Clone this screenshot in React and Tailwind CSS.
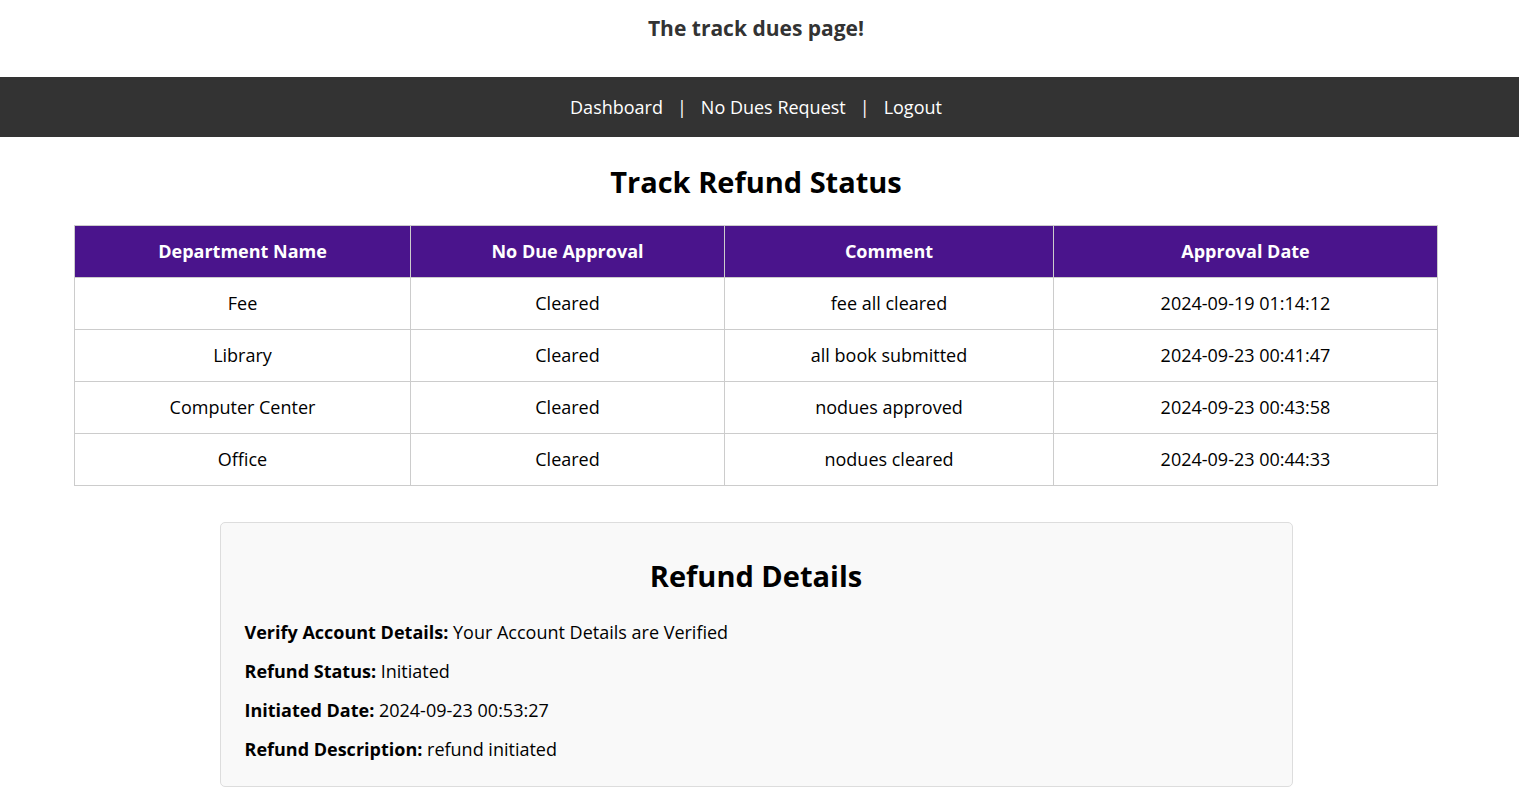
const ROWS = [
  { dept: 'Fee', status: 'Cleared', comment: 'fee all cleared', date: '2024-09-19 01:14:12' },
  { dept: 'Library', status: 'Cleared', comment: 'all book submitted', date: '2024-09-23 00:41:47' },
  { dept: 'Computer Center', status: 'Cleared', comment: 'nodues approved', date: '2024-09-23 00:43:58' },
  { dept: 'Office', status: 'Cleared', comment: 'nodues cleared', date: '2024-09-23 00:44:33' },
]

const DETAILS = [
  ['Verify Account Details', 'Your Account Details are Verified'],
  ['Refund Status', 'Initiated'],
  ['Initiated Date', '2024-09-23 00:53:27'],
  ['Refund Description', 'refund initiated'],
]

export default function App() {
  return (
    <div className="min-h-screen bg-white">
      <div className="w-[1512px] text-black font-['Comic_Sans_MS','Open_Sans',sans-serif]">
        {/* Header */}
        <div className="h-[77px] flex justify-center pt-[13px]">
          <p className="text-[21px] font-bold text-[#333]">The track dues page!</p>
        </div>

        {/* Nav */}
        <nav className="h-[60px] bg-[#333] flex items-center justify-center text-white text-[18px] gap-[14px] -mr-[7px] pr-[7px]">
          <a>Dashboard</a>
          <span>|</span>
          <a>No Dues Request</a>
          <span>|</span>
          <a>Logout</a>
        </nav>

        <h2 className="text-center text-[29px] font-bold mt-[25px] mb-[23px] leading-[40px]">Track Refund Status</h2>

        {/* Table */}
        <div className="px-[74px]">
          <table className="w-full border-collapse text-[18px] text-center">
            <thead>
              <tr className="bg-[#4a148c] text-white h-[52px]">
                <th className="w-[336px] border border-[#ccc] font-bold">Department Name</th>
                <th className="w-[314px] border border-[#ccc] font-bold">No Due Approval</th>
                <th className="w-[329px] border border-[#ccc] font-bold">Comment</th>
                <th className="border border-[#ccc] font-bold">Approval Date</th>
              </tr>
            </thead>
            <tbody>
              {ROWS.map(r => (
                <tr key={r.dept} className="h-[52px]">
                  <td className="border border-[#ccc]">{r.dept}</td>
                  <td className="border border-[#ccc]">{r.status}</td>
                  <td className="border border-[#ccc]">{r.comment}</td>
                  <td className="border border-[#ccc]">{r.date}</td>
                </tr>
              ))}
            </tbody>
          </table>
        </div>

        {/* Refund details */}
        <div className="mx-auto mt-[36px] w-[1073px] bg-[#f9f9f9] border border-[#ddd] rounded-[5px] px-[24px] pt-[33px] pb-[23px]">
          <h3 className="text-center text-[29px] font-bold leading-[40px] mb-[22px]">Refund Details</h3>
          <div className="flex flex-col gap-[11px] text-[18px]">
            {DETAILS.map(([k, v]) => (
              <p key={k} className="leading-[28px]">
                <b>{k}:</b> {v}
              </p>
            ))}
          </div>
        </div>
      </div>
    </div>
  )
}
